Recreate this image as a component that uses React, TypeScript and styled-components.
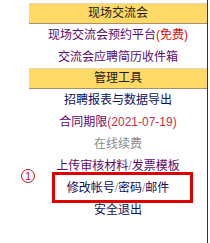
import styled, { createGlobalStyle } from "styled-components"

const GlobalStyle = createGlobalStyle`
	body {
		margin: 0;
		background: #ffffff;
		font-family: "Liberation Sans", "Noto Sans CJK SC", sans-serif;
	}
`

const Page = styled.div`
	position: relative;
	width: 210px;
	height: 243px;
	overflow: hidden;
`

const Panel = styled.div`
	margin-left: 29px;
	width: 179px;
	height: 243px;
	padding-top: 3px;
	box-sizing: border-box;
	border-right: 1px solid #3a2e22;
	display: flex;
	flex-direction: column;
`

const Header = styled.div`
	height: 21px;
	box-sizing: border-box;
	border-top: 1px solid #e4d6bc;
	border-bottom: 1px solid #a8906c;
	background: #ffd966;
	color: #1a1a1a;
	font-size: 12px;
	line-height: 19px;
	text-align: center;
`

const Item = styled.div<{ $tone?: "navy" | "purple" | "gray" }>`
	height: 22px;
	line-height: 22px;
	font-size: 12px;
	text-align: center;
	white-space: nowrap;
	color: ${(p) => (p.$tone === "purple" ? "#5c0a6e" : p.$tone === "gray" ? "#8a8a8a" : "#101060")};
`

const Sep = styled.span`
	color: #9a9aa8;
`

const Free = styled.span`
	color: #e01010;
`

const Date = styled.span`
	color: #c8304a;
`

const Callout = styled.div`
	position: absolute;
	left: 52px;
	top: 172px;
	width: 141px;
	height: 31px;
	box-sizing: border-box;
	border: 3px solid #e00000;
`

const Mark = styled.div`
	position: absolute;
	left: 21px;
	top: 169px;
	width: 14px;
	height: 14px;
	box-sizing: border-box;
	border: 1px solid #c81414;
	border-radius: 50%;
	color: #c81414;
	font-size: 11px;
	line-height: 12px;
	text-align: center;
`

const App = () => {
	return (
		<Page>
			<GlobalStyle />
			<Panel>
				<Header>现场交流会</Header>
				<Item $tone='purple'>
					现场交流会预约平台<Free>(免费)</Free>
				</Item>
				<Item $tone='purple'>交流会应聘简历收件箱</Item>
				<Header>管理工具</Header>
				<Item>招聘报表与数据导出</Item>
				<Item $tone='purple'>
					合同期限<Date>(2021-07-19)</Date>
				</Item>
				<Item $tone='gray'>在线续费</Item>
				<Item $tone='purple'>
					上传审核材料<Sep>/</Sep>发票模板
				</Item>
				<Item>
					修改帐号<Sep>/</Sep>密码<Sep>/</Sep>邮件
				</Item>
				<Item>安全退出</Item>
			</Panel>
			<Callout />
			<Mark>1</Mark>
		</Page>
	)
}

export default App
